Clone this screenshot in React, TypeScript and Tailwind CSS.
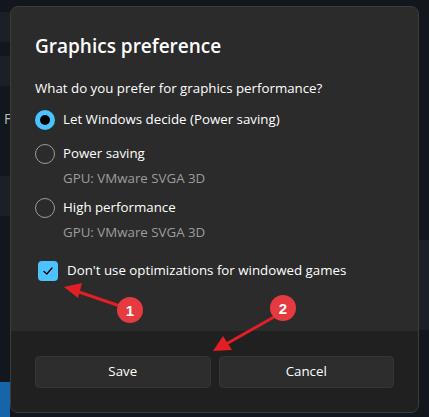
import React from "react";

const font = { fontFamily: '"Open Sans", "Noto Sans", sans-serif' };

const Radio: React.FC<{ checked?: boolean }> = ({ checked }) =>
  checked ? (
    <span className="flex h-5 w-5 items-center justify-center rounded-full bg-[#4cc2ff]">
      <span className="h-[10px] w-[10px] rounded-full bg-black" />
    </span>
  ) : (
    <span className="h-5 w-5 rounded-full border border-[#9b9b9b]" />
  );

const App: React.FC = () => {
  return (
    <div className="relative h-[417px] w-[429px] overflow-hidden bg-[#12171d]" style={font}>
      {/* bits of the settings page behind */}
      <div className="absolute left-0 top-[12px] h-[30px] w-[12px] rounded-r bg-[#1b2027]" />
      <div className="absolute left-0 top-[56px] h-[30px] w-[12px] rounded-r bg-[#1b2027]" />
      <div className="absolute left-[4px] top-[108px] text-[14px] text-[#b9bcc0]">F</div>
      <div className="absolute left-0 top-[176px] h-[40px] w-[12px] rounded-r bg-[#1b2027]" />
      <div className="absolute left-0 top-[382px] h-[35px] w-[10px] bg-[#1565a8]" />
      <div className="absolute right-0 top-[240px] h-[90px] w-[10px] bg-[#1b2027]" />

      {/* dialog */}
      <div className="absolute left-[10px] top-[6px] flex h-[407px] w-[409px] flex-col overflow-hidden rounded-[8px] border border-[#3c3c3c] bg-[#2b2b2b] text-white">
        <div className="flex-1 px-[24px] pt-[25px]">
          <h1 className="text-[19px] font-semibold leading-[28px]">Graphics preference</h1>
          <p className="mt-[18px] text-[13.3px] leading-[20px]">What do you prefer for graphics performance?</p>

          <div className="mt-[6px] flex flex-col text-[13.3px]">
            <div className="flex h-[32px] items-center gap-[8px]">
              <Radio checked />
              <span>Let Windows decide (Power saving)</span>
            </div>
            <div className="mt-[2px] flex h-[32px] items-center gap-[8px]">
              <Radio />
              <span>Power saving</span>
            </div>
            <div className="h-[16px] pl-[28px] leading-[16px] text-[#9d9d9d]">GPU: VMware SVGA 3D</div>
            <div className="mt-[6px] flex h-[32px] items-center gap-[8px]">
              <Radio />
              <span>High performance</span>
            </div>
            <div className="h-[16px] pl-[28px] leading-[16px] text-[#9d9d9d]">GPU: VMware SVGA 3D</div>
            <div className="mt-[21px] flex h-[20px] items-center gap-[9px] pl-[3px]">
              <span className="flex h-[20px] w-[20px] items-center justify-center rounded-[4px] bg-[#4cc2ff]">
                <svg width="12" height="12" viewBox="0 0 12 12" fill="none">
                  <path d="M2 6.5 L4.8 9 L10 3" stroke="#000" strokeWidth="1.3" strokeLinecap="round" strokeLinejoin="round" />
                </svg>
              </span>
              <span>Don't use optimizations for windowed games</span>
            </div>
          </div>
        </div>

        <div className="flex h-[81px] gap-[8px] bg-[#202020] px-[24px] pt-[25px]">
          <button className="h-[32px] flex-1 rounded-[4px] border border-[#353535] bg-[#2d2d2d] text-[13.3px] text-white">Save</button>
          <button className="h-[32px] flex-1 rounded-[4px] border border-[#353535] bg-[#2d2d2d] text-[13.3px] text-white">Cancel</button>
        </div>
      </div>

      {/* annotation arrows */}
      <svg className="absolute left-0 top-0" width="429" height="417" viewBox="0 0 429 417">
        <line x1="120" y1="306" x2="76" y2="291" stroke="#e31e24" strokeWidth="3" strokeLinecap="round" />
        <polygon points="64,287 82,283 78,298" fill="#e31e24" />
        <line x1="274" y1="317" x2="228" y2="343" stroke="#e31e24" strokeWidth="3" strokeLinecap="round" />
        <polygon points="213,351 223,336 232,350" fill="#e31e24" />
      </svg>
      <div className="absolute left-[117px] top-[297px] flex h-[26px] w-[26px] items-center justify-center rounded-full bg-[#e53a3f] text-[15px] font-semibold leading-none text-white" style={{ fontFamily: '"Liberation Sans", sans-serif' }}>1</div>
      <div className="absolute left-[270px] top-[295px] flex h-[26px] w-[26px] items-center justify-center rounded-full bg-[#e53a3f] text-[15px] font-semibold leading-none text-white" style={{ fontFamily: '"Liberation Sans", sans-serif' }}>2</div>
    </div>
  );
};

export default App;
